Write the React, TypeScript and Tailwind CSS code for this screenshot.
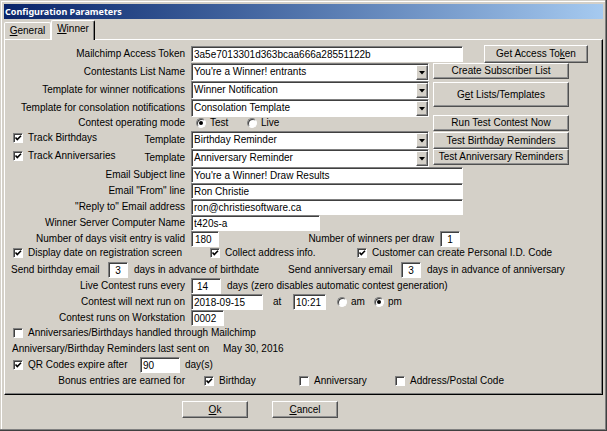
import React from "react";

const SUNKEN =
  "border border-t-[#808080] border-l-[#808080] border-b-white border-r-white bg-white shadow-[inset_1px_1px_0_#404040] outline-none";
const RAISED =
  "border border-t-white border-l-white border-b-[#505050] border-r-[#505050] bg-[#d4d0c8] shadow-[inset_-1px_-1px_0_#909090]";

function Field({ id, value, className, label }: { id: string; value: string; className: string; label?: string }) {
  return (
    <input
      id={id}
      aria-label={label}
      defaultValue={value}
      className={`h-4 shrink-0 ${SUNKEN} ${className}`}
    />
  );
}

function RowLabel({ htmlFor, children }: { htmlFor: string; children: React.ReactNode }) {
  return (
    <label htmlFor={htmlFor} className="mr-1.5 w-[180px] shrink-0 text-right">
      {children}
    </label>
  );
}

function Combo({ id, value }: { id: string; value: string }) {
  return (
    <div className="relative h-[18px] min-w-0 flex-1">
      <select id={id} className={`h-full w-full appearance-none pl-0.5 ${SUNKEN}`} defaultValue={value}>
        <option>{value}</option>
      </select>
      <span
        className={`pointer-events-none absolute top-0.5 right-px bottom-px flex w-3 items-center justify-center ${RAISED}`}
      >
        <svg width="6" height="4" viewBox="0 0 6 4" aria-hidden="true">
          <path d="M0 0H6L3 3.5Z" fill="#000" />
        </svg>
      </span>
    </div>
  );
}

function Check({ label, checked, className = "" }: { label: string; checked?: boolean; className?: string }) {
  return (
    <label className={`flex shrink-0 items-center gap-[5px] ${className}`}>
      <span className="relative size-2.5 shrink-0">
        <input type="checkbox" defaultChecked={checked} className={`peer block size-2.5 appearance-none ${SUNKEN}`} />
        <svg
          viewBox="0 0 10 10"
          className="pointer-events-none absolute inset-0 hidden size-2.5 peer-checked:block"
          aria-hidden="true"
        >
          <path d="M2.5 4.5L4.3 6.5L8 2.8" fill="none" stroke="#000" strokeWidth="1.6" />
        </svg>
      </span>
      {label}
    </label>
  );
}

function Radio({ name, label, checked, className = "" }: { name: string; label: string; checked?: boolean; className?: string }) {
  return (
    <label className={`flex shrink-0 items-center gap-1 ${className}`}>
      <span className="relative size-2.5 shrink-0">
        <input
          type="radio"
          name={name}
          defaultChecked={checked}
          className={`peer block size-2.5 appearance-none rounded-full ${SUNKEN}`}
        />
        <span className="pointer-events-none absolute top-[3px] left-[3px] hidden size-1 rounded-full bg-black peer-checked:block" />
      </span>
      {label}
    </label>
  );
}

function Button({ children, className }: { children: React.ReactNode; className: string }) {
  return (
    <button type="button" className={`flex shrink-0 items-center justify-center ${RAISED} ${className}`}>
      {children}
    </button>
  );
}

const ROW = "flex h-4 items-center";

export default function App() {
  return (
    <div className="flex min-h-screen w-full flex-col border-r border-b border-r-[#404040] border-b-[#404040] bg-[#d4d0c8] p-1 pr-[3px] font-['Liberation_Sans',Arial,sans-serif] text-[10px] leading-[14px] whitespace-nowrap text-black shadow-[inset_-1px_-1px_0_#808080,inset_1px_1px_0_#d4d0c8,inset_2px_2px_0_#fff]">
      <header className="flex h-[15px] shrink-0 items-center bg-gradient-to-r from-[#0a246a] to-[#a6caf0] pl-px">
        <h1 className="font-['Noto_Sans',sans-serif] text-[9px] font-bold text-white">Configuration Parameters</h1>
      </header>

      <div role="tablist" className="flex h-5 shrink-0 items-end">
        <button
          type="button"
          role="tab"
          aria-selected="false"
          className="h-[17px] w-[47px] rounded-t-xs border border-b-0 border-white"
        >
          <u>G</u>eneral
        </button>
        <button
          type="button"
          role="tab"
          aria-selected="true"
          className="relative z-10 -mb-px h-5 w-11 rounded-t-xs border border-b-0 border-white border-r-black bg-[#d4d0c8] pb-1 shadow-[inset_-1px_0_0_#808080]"
        >
          <u>W</u>inner
        </button>
      </div>

      <main className="flex flex-col border border-t-white border-r-black border-b-black border-l-white pt-[5px] pb-1.5 shadow-[inset_-1px_-1px_0_#808080]">
        <div className="flex h-[18px] items-center">
          <RowLabel htmlFor="token">Mailchimp Access Token</RowLabel>
          <Field id="token" value="3a5e7013301d363bcaa666a28551122b" className="w-[272px] pl-0.5" />
          <Button className="ml-[21px] h-[18px] w-[104px]">
            <span>
              Get Access To<u>k</u>en
            </span>
          </Button>
        </div>

        <div className="flex">
          <div className="flex w-[424px] shrink-0 flex-col">
            <div className="flex items-center">
              <RowLabel htmlFor="list">Contestants List Name</RowLabel>
              <Combo id="list" value="You're a Winner! entrants" />
            </div>
            <div className="flex items-center">
              <RowLabel htmlFor="winner">Template for winner notifications</RowLabel>
              <Combo id="winner" value="Winner Notification" />
            </div>
            <div className="flex items-center">
              <RowLabel htmlFor="consolation">Template for consolation notifications</RowLabel>
              <Combo id="consolation" value="Consolation Template" />
            </div>
            <div role="radiogroup" aria-labelledby="mode" className="flex h-3.5 items-center pb-0.5">
              <span id="mode" className="mr-[11px] w-[180px] text-right">
                Contest operating mode
              </span>
              <Radio name="mode" label="Test" checked className="w-[51px]" />
              <Radio name="mode" label="Live" />
            </div>
            <div className="flex items-start">
              <Check label="Track Birthdays" checked className="ml-2 w-[112px]" />
              <label htmlFor="birthday" className="mr-1.5 w-[60px] self-center text-right">
                Template
              </label>
              <Combo id="birthday" value="Birthday Reminder" />
            </div>
            <div className="flex items-start">
              <Check label="Track Anniversaries" checked className="ml-2 w-[112px]" />
              <label htmlFor="anniversary" className="mr-1.5 w-[60px] self-center text-right">
                Template
              </label>
              <Combo id="anniversary" value="Anniversary Reminder" />
            </div>
          </div>
          <div className="ml-1 flex w-[136px] flex-col">
            <Button className="h-4">Create Subscriber List</Button>
            <Button className="mt-[3px] h-[25px]">
              <span>
                G<u>e</u>t Lists/Templates
              </span>
            </Button>
            <Button className="mt-2 h-4">Run Test Contest Now</Button>
            <Button className="mt-px h-[17px]">Test Birthday Reminders</Button>
            <Button className="h-4">Test Anniversary Reminders</Button>
          </div>
        </div>

        <div className={ROW}>
          <RowLabel htmlFor="subject">Email Subject line</RowLabel>
          <Field id="subject" value="You're a Winner! Draw Results" className="w-[272px] pl-0.5" />
        </div>
        <div className={ROW}>
          <RowLabel htmlFor="from">Email "From" line</RowLabel>
          <Field id="from" value="Ron Christie" className="w-[272px] pl-0.5" />
        </div>
        <div className={ROW}>
          <RowLabel htmlFor="reply">"Reply to" Email address</RowLabel>
          <Field id="reply" value="ron@christiesoftware.ca" className="w-[272px] pl-0.5" />
        </div>
        <div className={ROW}>
          <RowLabel htmlFor="server">Winner Server Computer Name</RowLabel>
          <Field id="server" value="t420s-a" className="w-[129px] pl-0.5" />
        </div>
        <div className={ROW}>
          <RowLabel htmlFor="valid">Number of days visit entry is valid</RowLabel>
          <Field id="valid" value="180" className="w-7 pl-[3px]" />
          <label htmlFor="draw" className="mr-1.5 w-[215px] text-right">
            Number of winners per draw
          </label>
          <Field id="draw" value="1" className="w-5 text-center" />
        </div>

        <div className="flex h-[15px] items-start pl-2">
          <Check label="Display date on registration screen" checked className="h-3 w-[197px]" />
          <Check label="Collect address info." checked className="h-3 w-[147px]" />
          <Check label="Customer can create Personal I.D. Code" checked className="h-3" />
        </div>

        <div className={`${ROW} pl-1.5`}>
          <label htmlFor="bdays" className="w-[97px]">
            Send birthday email
          </label>
          <Field id="bdays" value="3" className="w-5 text-center" />
          <span className="ml-1.5 w-[154px]">days in advance of birthdate</span>
          <label htmlFor="adays" className="w-[113px]">
            Send anniversary email
          </label>
          <Field id="adays" value="3" className="w-5 text-center" />
          <span className="ml-1.5">days in advance of anniversary</span>
        </div>
        <div className={ROW}>
          <RowLabel htmlFor="every">Live Contest runs every</RowLabel>
          <Field id="every" value="14" className="mr-1.5 w-[30px] pl-[5px]" />
          <span>days (zero disables automatic contest generation)</span>
        </div>
        <div className={ROW}>
          <RowLabel htmlFor="next">Contest will next run on</RowLabel>
          <Field id="next" value="2018-09-15" className="w-[72px] pl-0.5" />
          <label htmlFor="time" className="w-[30px] pl-2.5">
            at
          </label>
          <Field id="time" value="10:21" className="mr-[11px] w-[33px] pl-0.5" />
          <Radio name="ampm" label="am" className="w-[37px]" />
          <Radio name="ampm" label="pm" checked />
        </div>
        <div className={ROW}>
          <RowLabel htmlFor="station">Contest runs on Workstation</RowLabel>
          <Field id="station" value="0002" className="w-[33px] pl-0.5" />
        </div>

        <div className="flex h-3.5 items-center pl-2">
          <Check label="Anniversaries/Birthdays handled through Mailchimp" />
        </div>
        <p className="mt-0.5 flex pl-[7px]">
          <span className="w-[211px]">Anniversary/Birthday Reminders last sent on</span>
          <span>May 30, 2016</span>
        </p>
        <div className="mt-px flex h-4 items-center pl-2">
          <Check label="QR Codes expire after" checked className="w-[127px]" />
          <Field id="expire" label="QR code expiry in days" value="90" className="mr-[5px] w-10 pl-0.5" />
          <span>day(s)</span>
        </div>
        <div className="mt-0.5 mb-px flex h-3 items-center">
          <span className="mr-[19px] w-[180px] text-right">Bonus entries are earned for</span>
          <Check label="Birthday" checked className="w-[95px]" />
          <Check label="Anniversary" className="w-24" />
          <Check label="Address/Postal Code" />
        </div>
      </main>

      <footer className="mt-1.5 flex gap-6 pl-[178px]">
        <Button className="h-[17px] w-[66px]">
          <span>
            <u>O</u>k
          </span>
        </Button>
        <Button className="h-[17px] w-[66px]">
          <span>
            <u>C</u>ancel
          </span>
        </Button>
      </footer>
    </div>
  );
}
